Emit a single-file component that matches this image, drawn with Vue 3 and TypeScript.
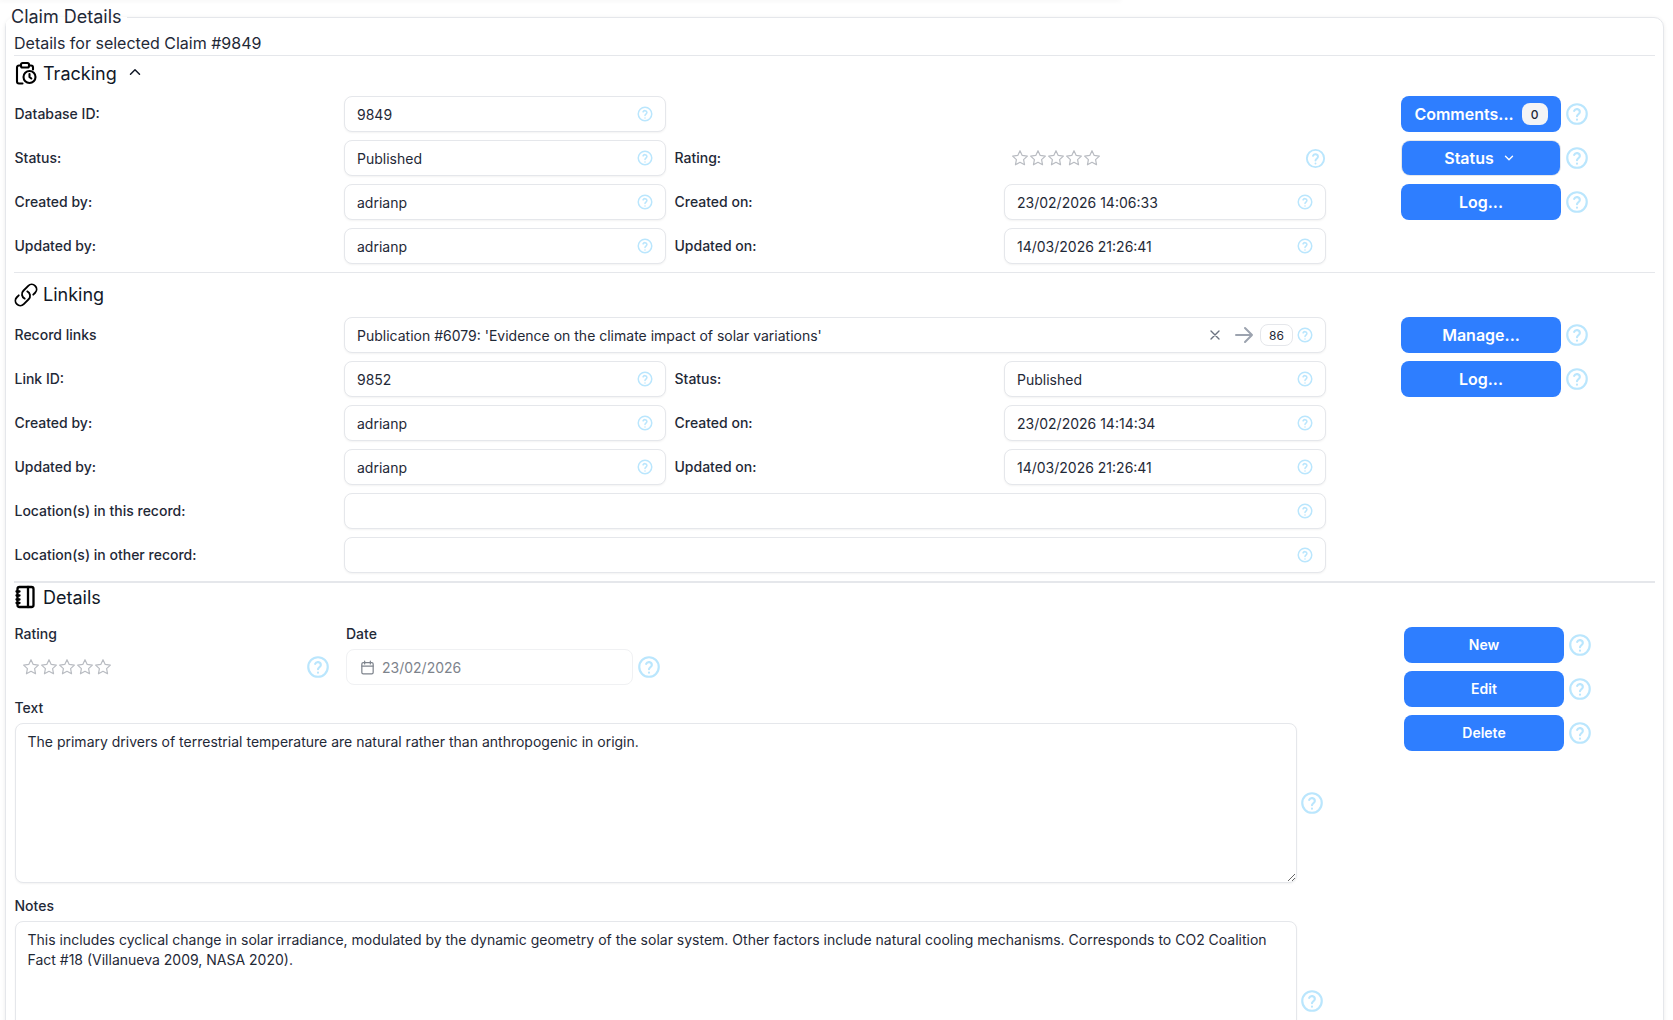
<script setup lang="ts">
interface Field { label?: string; value?: string; kind?: string }
const tracking: Field[][] = [
  [{ label: 'Database ID:', value: '9849' }, {}],
  [{ label: 'Status:', value: 'Published' }, { label: 'Rating:', kind: 'stars' }],
  [{ label: 'Created by:', value: 'adrianp' }, { label: 'Created on:', value: '23/02/2026 14:06:33' }],
  [{ label: 'Updated by:', value: 'adrianp' }, { label: 'Updated on:', value: '14/03/2026 21:26:41' }],
]
const linking: Field[][] = [
  [{ label: 'Link ID:', value: '9852' }, { label: 'Status:', value: 'Published' }],
  [{ label: 'Created by:', value: 'adrianp' }, { label: 'Created on:', value: '23/02/2026 14:14:34' }],
  [{ label: 'Updated by:', value: 'adrianp' }, { label: 'Updated on:', value: '14/03/2026 21:26:41' }],
]
const stars = [0, 1, 2, 3, 4]
</script>

<template>
  <div class="page">
    <div class="top-shade"></div>
    <svg class="defs" aria-hidden="true">
      <symbol id="help" viewBox="0 0 24 24">
        <circle cx="12" cy="12" r="9" fill="none" stroke="currentColor" stroke-width="2" />
        <path d="M9.4 9.2a2.7 2.7 0 0 1 5.2.9c0 1.8-2.6 2.4-2.6 4M12 17.2v.1" fill="none" stroke="currentColor" stroke-width="2" stroke-linecap="round" />
      </symbol>
      <symbol id="star" viewBox="1.5 1.5 21 21">
        <path d="M12 3.5l2.6 5.5 6 .8-4.4 4.1 1.1 6-5.3-2.9-5.3 2.9 1.1-6-4.4-4.1 6-.8z" fill="none" stroke="currentColor" stroke-width="1.4" stroke-linejoin="round" />
      </symbol>
    </svg>
    <fieldset class="panel">
      <legend class="legend">Claim Details</legend>
      <div class="subtitle">Details for selected Claim #9849</div>

      <section class="section tracking">
        <div class="heading">
          <svg class="head-icon" viewBox="0 0 24 24" fill="none" stroke="currentColor" stroke-width="2.1" stroke-linecap="round" stroke-linejoin="round">
            <path d="M8 4.5H6a2 2 0 0 0-2 2v14a2 2 0 0 0 2 2h3.5" />
            <path d="M16 4.5h2a2 2 0 0 1 2 2v2" />
            <rect x="8" y="2" width="8" height="4.5" rx="1.5" />
            <circle cx="16.5" cy="16" r="6" />
            <path d="M16.5 13v3l1.8 1.5" />
          </svg>
          <span>Tracking</span>
          <svg class="chev" viewBox="0 0 24 24" fill="none" stroke="currentColor" stroke-width="2" stroke-linecap="round" stroke-linejoin="round"><path d="M6 15l6-6 6 6" /></svg>
        </div>
        <div class="body">
          <div class="form">
            <template v-for="(row, i) in tracking" :key="i">
              <label class="lbl">{{ row[0].label }}</label>
              <div class="input">
                <span class="val">{{ row[0].value }}</span>
                <svg class="help small"><use href="#help" /></svg>
              </div>
              <label class="lbl second">{{ row[1].label }}</label>
              <div v-if="row[1].value" class="input">
                <span class="val">{{ row[1].value }}</span>
                <svg class="help small"><use href="#help" /></svg>
              </div>
              <div v-else-if="row[1].kind === 'stars'" class="stars-cell">
                <div class="stars">
                  <svg v-for="s in stars" :key="s" class="star"><use href="#star" /></svg>
                </div>
                <svg class="help mid"><use href="#help" /></svg>
              </div>
              <div v-else></div>
            </template>
          </div>
          <div class="actions">
            <div class="action">
              <button class="btn"><span>Comments...</span><span class="count">0</span></button>
              <svg class="help big"><use href="#help" /></svg>
            </div>
            <div class="action">
              <button class="btn status"><span>Status</span><svg class="down" viewBox="0 0 24 24" fill="none" stroke="currentColor" stroke-width="2.4" stroke-linecap="round" stroke-linejoin="round"><path d="M6 9l6 6 6-6" /></svg></button>
              <svg class="help big"><use href="#help" /></svg>
            </div>
            <div class="action">
              <button class="btn">Log...</button>
              <svg class="help big"><use href="#help" /></svg>
            </div>
          </div>
        </div>
      </section>

      <section class="section linking">
        <div class="heading">
          <svg class="head-icon link-icon" viewBox="0 0 24 24" fill="none" stroke="currentColor" stroke-width="1.7" stroke-linecap="round" stroke-linejoin="round">
            <path d="M13.19 8.688a4.5 4.5 0 0 1 1.242 7.244l-4.5 4.5a4.5 4.5 0 0 1-6.364-6.364l1.757-1.757m13.35-.622 1.757-1.757a4.5 4.5 0 0 0-6.364-6.364l-4.5 4.5a4.5 4.5 0 0 0 1.242 7.244" />
          </svg>
          <span>Linking</span>
        </div>
        <div class="body">
          <div class="form">
            <label class="lbl">Record links</label>
            <div class="input wide">
              <span class="val">Publication #6079: 'Evidence on the climate impact of solar variations'</span>
              <svg class="x" viewBox="0 0 24 24" fill="none" stroke="currentColor" stroke-width="2" stroke-linecap="round"><path d="M6 6l12 12M18 6L6 18" /></svg>
              <svg class="arrow" viewBox="0 0 24 24" fill="none" stroke="currentColor" stroke-width="2" stroke-linecap="round" stroke-linejoin="round"><path d="M4 12h16M13 5l7 7-7 7" /></svg>
              <span class="pill">86</span>
              <svg class="help small"><use href="#help" /></svg>
            </div>
            <template v-for="(row, i) in linking" :key="i">
              <label class="lbl">{{ row[0].label }}</label>
              <div class="input">
                <span class="val">{{ row[0].value }}</span>
                <svg class="help small"><use href="#help" /></svg>
              </div>
              <label class="lbl second">{{ row[1].label }}</label>
              <div class="input">
                <span class="val">{{ row[1].value }}</span>
                <svg class="help small"><use href="#help" /></svg>
              </div>
            </template>
            <label class="lbl">Location(s) in this record:</label>
            <div class="input wide">
              <span class="val"></span>
              <svg class="help small"><use href="#help" /></svg>
            </div>
            <label class="lbl">Location(s) in other record:</label>
            <div class="input wide">
              <span class="val"></span>
              <svg class="help small"><use href="#help" /></svg>
            </div>
          </div>
          <div class="actions">
            <div class="action">
              <button class="btn">Manage...</button>
              <svg class="help big"><use href="#help" /></svg>
            </div>
            <div class="action">
              <button class="btn">Log...</button>
              <svg class="help big"><use href="#help" /></svg>
            </div>
          </div>
        </div>
      </section>

      <section class="section details">
        <div class="heading">
          <svg class="head-icon" viewBox="0 0 24 24" fill="none" stroke="currentColor" stroke-width="2.3" stroke-linecap="round" stroke-linejoin="round">
            <rect x="4.5" y="2" width="16" height="20" rx="2" />
            <path d="M15 2v20" />
            <path d="M3.5 6.5h3M3.5 10.5h3M3.5 14.5h3M3.5 18h3" />
          </svg>
          <span>Details</span>
        </div>
        <div class="detail-body">
          <div class="detail-main">
            <div class="detail-top">
              <div class="rating-col">
                <label class="cap">Rating</label>
                <div class="rating-line">
                  <div class="stars">
                    <svg v-for="s in stars" :key="s" class="star"><use href="#star" /></svg>
                  </div>
                  <svg class="help big"><use href="#help" /></svg>
                </div>
              </div>
              <div class="date-col">
                <label class="cap">Date</label>
                <div class="date-line">
                  <div class="date-input">
                    <svg class="cal" viewBox="0 0 24 24" fill="none" stroke="currentColor" stroke-width="1.7" stroke-linecap="round" stroke-linejoin="round"><rect x="4" y="5" width="16" height="16" rx="2" /><path d="M8 3v4M16 3v4M4 10h16" /></svg>
                    <span>23/02/2026</span>
                  </div>
                  <svg class="help big"><use href="#help" /></svg>
                </div>
              </div>
            </div>
            <label class="cap text-cap">Text</label>
            <div class="area-line">
              <textarea class="area a1" readonly>The primary drivers of terrestrial temperature are natural rather than anthropogenic in origin.</textarea>
              <svg class="help big"><use href="#help" /></svg>
            </div>
            <label class="cap notes-cap">Notes</label>
            <div class="area-line">
              <textarea class="area a2" readonly>This includes cyclical change in solar irradiance, modulated by the dynamic geometry of the solar system. Other factors include natural cooling mechanisms. Corresponds to CO2 Coalition Fact #18 (Villanueva 2009, NASA 2020).</textarea>
              <svg class="help big"><use href="#help" /></svg>
            </div>
          </div>
          <div class="actions detail-actions">
            <div class="action">
              <button class="btn sm">New</button>
              <svg class="help big"><use href="#help" /></svg>
            </div>
            <div class="action">
              <button class="btn sm">Edit</button>
              <svg class="help big"><use href="#help" /></svg>
            </div>
            <div class="action">
              <button class="btn sm">Delete</button>
              <svg class="help big"><use href="#help" /></svg>
            </div>
          </div>
        </div>
      </section>
    </fieldset>
  </div>
</template>

<style>
html, body { margin: 0; height: 100%; overflow: hidden; background: #fff; }
</style>

<style scoped>
* { box-sizing: border-box; }
.defs { display: none; }
.page {
  position: relative;
  height: 1020px;
  overflow: hidden;
  padding: 6px 9px 0 5px;
  background: #fff;
  font-family: Inter, "Noto Sans", sans-serif;
  color: #1f2937;
  font-size: 14px;
}
.top-shade {
  position: absolute;
  top: 0;
  left: 0;
  width: 1120px;
  height: 0;
  box-shadow: 0 0 4px 1px rgba(0, 0, 0, .06);
}
.panel {
  margin: 0;
  padding: 0 8px;
  border: 1px solid #e5e7eb;
  border-radius: 10px;
  min-width: 0;
  min-height: 1120px;
  box-shadow: 0 1px 4px rgba(0, 0, 0, .08);
}
.legend {
  margin-left: -8px;
  padding: 0 5px;
  font-size: 18px;
  line-height: 22px;
  color: #1f2937;
}
.subtitle {
  height: 24px;
  font-size: 16px;
  line-height: 24px;
  margin-top: 3px;
}
.section { border-top: 1px solid #e5e7eb; }
.section.details { border-top-width: 2px; }
.heading {
  display: flex;
  align-items: center;
  gap: 6px;
  font-size: 18px;
  color: #111827;
  padding-left: 1px;
}
.tracking { padding-bottom: 8px; }
.tracking .heading { height: 34px; margin-bottom: 6px; }
.linking { padding-bottom: 8px; }
.linking .heading { height: 43px; margin-bottom: 1px; }
.details .heading { height: 28px; }
.head-icon { width: 24px; height: 24px; margin-left: -2px; color: #000; flex: none; }
.link-icon { width: 26px; height: 26px; margin-right: -2px; }
.chev { width: 18px; height: 18px; margin-left: 3px; margin-top: -2px; }
.body { display: flex; }
.form {
  display: grid;
  grid-template-columns: 329px 322px 338px 322px;
  grid-auto-rows: 36px;
  row-gap: 8px;
  width: 1311px;
  margin-left: 1px;
  flex: none;
}
.lbl { font-weight: 500; font-size: 14px; line-height: 35px; color: #1f2937; margin-left: -0.5px; }
.lbl.second { padding-left: 9px; }
.input {
  display: flex;
  align-items: center;
  height: 36px;
  padding: 0 12px;
  border: 1px solid #e5e7eb;
  border-radius: 8px;
  background: #fff;
  box-shadow: 0 1px 2px rgba(0, 0, 0, .05);
  font-size: 14px;
  color: #1f2937;
}
.input.wide { grid-column: 2 / 5; }
.val { flex: 1; min-width: 0; white-space: nowrap; padding-top: 1px; }
.help { color: #bae6fd; flex: none; }
.help.small { width: 18px; height: 18px; margin-right: -1px; }
.help.mid { width: 23px; height: 23px; margin-right: -1px; }
.help.big { width: 26px; height: 26px; }
.stars-cell { display: flex; align-items: center; justify-content: space-between; padding-left: 7px; }
.stars { display: flex; color: #b9bcc2; }
.star { width: 18px; height: 18px; }
.x { width: 16px; height: 16px; color: #6b7280; margin-right: 9px; }
.arrow { width: 24px; height: 24px; color: #9ca3af; margin-right: 4px; }
.pill {
  display: flex;
  align-items: center;
  justify-content: center;
  width: 33px;
  height: 22px;
  border: 1px solid #e5e7eb;
  border-radius: 8px;
  font-size: 12px;
  margin-right: 3px;
}
.actions { margin-left: 75px; display: flex; flex-direction: column; gap: 8px; flex: none; }
.action { display: flex; align-items: center; gap: 3px; height: 36px; }
.btn {
  display: flex;
  align-items: center;
  justify-content: center;
  gap: 8px;
  width: 160px;
  height: 36px;
  border: 0;
  border-radius: 8px;
  background: #2e7eff;
  color: #fff;
  font: 600 16px Inter, "Noto Sans", sans-serif;
  padding: 0;
}
.btn.status { width: 158px; height: 34px; margin: 0 1px; box-shadow: 0 0 0 1px #e5e7eb; }
.down { width: 14px; height: 14px; margin-left: 0; margin-right: 2px; }
.btn.sm { font-size: 14px; padding-bottom: 1px; }
.count {
  display: flex;
  align-items: center;
  justify-content: center;
  width: 26px;
  height: 22px;
  border-radius: 8px;
  background: #f3f4f6;
  color: #1f2937;
  font-size: 12px;
  font-weight: 500;
}
.detail-body { display: flex; }
.detail-main { width: 1308px; flex: none; margin-left: 0.5px; }
.detail-top { display: flex; margin-top: 13px; }
.cap { display: block; font-size: 14px; font-weight: 500; line-height: 20px; color: #1f2937; }
.rating-col { width: 331.5px; }
.rating-line { display: flex; align-items: center; justify-content: space-between; height: 36px; margin-top: 5px; padding: 0 15px 0 7px; }
.date-col { flex: 1; }
.date-line { display: flex; align-items: center; gap: 3px; margin-top: 5px; }
.date-input {
  display: flex;
  align-items: center;
  gap: 6px;
  width: 287px;
  height: 36px;
  padding-left: 13px;
  border: 1px solid #f0f1f3;
  border-radius: 8px;
  color: #7d838c;
  background: #fff;
}
.cal { width: 17px; height: 17px; margin-left: -1px; }
.text-cap { margin-top: 13px; }
.area-line { display: flex; align-items: center; gap: 2px; margin-top: 5px; }
.area {
  display: block;
  width: 1282.5px;
  padding: 8px 12px;
  border: 1px solid #e5e7eb;
  border-radius: 8px;
  box-shadow: 0 1px 2px rgba(0, 0, 0, .05);
  font: 14px/20px Inter, "Noto Sans", sans-serif;
  color: #1f2937;
  outline: none;
  flex: none;
}
.a1 { height: 160px; }
.a2 { height: 160px; }
.notes-cap { margin-top: 13px; }
.detail-actions { margin-left: 0; margin-top: 16px; padding-left: 81.5px; }
</style>
